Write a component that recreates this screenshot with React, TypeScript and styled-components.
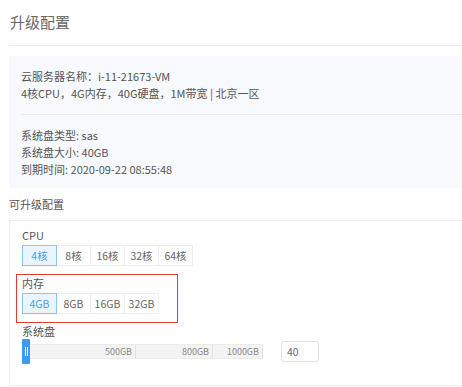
import React, { useState } from 'react';
import styled, { createGlobalStyle } from 'styled-components';

const GlobalStyle = createGlobalStyle`
  html, body {
    margin: 0;
    padding: 0;
    background: #fff;
    overflow: hidden;
  }
  body {
    font-family: "Noto Sans CJK SC", "Noto Sans", sans-serif;
    color: #666;
  }
`;

const Page = styled.div`
  width: 470px;
  padding-left: 9px;
  box-sizing: border-box;
`;

const Title = styled.h1`
  margin: 0;
  height: 46px;
  padding: 11px 0 0 1px;
  box-sizing: border-box;
  font-size: 15px;
  font-weight: 400;
  line-height: 22px;
  color: #666;
  border-bottom: 1px solid #eee;
`;

const InfoBox = styled.div`
  margin-top: 10px;
  background: #f7f9fc;
  padding: 12px 0 10px 12px;
`;

const InfoGroup = styled.div`
  & + & {
    border-top: 1px solid #e6e9ee;
    margin-top: 12px;
    padding-top: 12px;
  }
`;

const InfoLine = styled.div`
  font-size: 11px;
  line-height: 17px;
  color: #555;
`;

const SectionTitle = styled.div`
  font-size: 11px;
  line-height: 16px;
  color: #555;
  margin-top: 8px;
`;

const Panel = styled.div`
  margin-top: 8px;
  border: 1px solid #eee;
  height: 166px;
  box-sizing: border-box;
  padding: 6px 0 0 12px;
`;

const Group = styled.div<{ $highlight?: boolean }>`
  display: flex;
  flex-direction: column;
  align-items: flex-start;
  width: ${({ $highlight }) => ($highlight ? '162px' : 'auto')};
  margin-left: ${({ $highlight }) => ($highlight ? '-6px' : '0')};
  padding: ${({ $highlight }) => ($highlight ? '0 0 8px 5px' : '0')};
  border: ${({ $highlight }) => ($highlight ? '1px solid #e53935' : 'none')};
  box-sizing: border-box;
  margin-bottom: ${({ $highlight }) => ($highlight ? '0' : '8px')};
`;

const Label = styled.div`
  font-size: 11px;
  line-height: 16px;
  color: #555;
  margin-bottom: 2px;
`;

const ButtonRow = styled.div`
  display: flex;
`;

const Option = styled.button<{ $active?: boolean }>`
  width: 35px;
  height: 21px;
  padding: 0;
  margin: 0;
  font-family: inherit;
  font-size: 10.5px;
  line-height: 19px;
  cursor: pointer;
  color: ${({ $active }) => ($active ? '#4a9ff5' : '#666')};
  background: ${({ $active }) => ($active ? '#eaf5ff' : '#fff')};
  border: 1px solid ${({ $active }) => ($active ? '#8cc4fa' : '#eee')};
  margin-right: -1px;
  position: relative;
  z-index: ${({ $active }) => ($active ? 1 : 0)};
`;

const SliderRow = styled.div`
  display: flex;
  align-items: center;
  margin-top: -2px;
`;

const Track = styled.div`
  display: flex;
  align-items: center;
  height: 25px;
`;

const Handle = styled.div`
  width: 8px;
  height: 25px;
  background: #3d9af0;
  border-radius: 1px;
  display: flex;
  align-items: center;
  justify-content: center;
  gap: 1px;
`;

const Grip = styled.span`
  width: 1px;
  height: 9px;
  background: #fff;
`;

const Segment = styled.div<{ $width: number }>`
  width: ${({ $width }) => $width}px;
  height: 15px;
  background: #f3f3f3;
  border-top: 1px solid #ebebeb;
  border-bottom: 1px solid #ebebeb;
  border-right: 1px solid #e2e2e2;
  box-sizing: border-box;
  font-size: 9px;
  line-height: 13px;
  color: #888;
  text-align: right;
  padding-right: 3px;
`;

const SizeInput = styled.input`
  margin-left: 18px;
  width: 38px;
  height: 21px;
  box-sizing: border-box;
  border: 1px solid #e3e3e3;
  border-radius: 2px;
  padding: 0 5px;
  font-family: inherit;
  font-size: 10.5px;
  color: #666;
  outline: none;
`;

const cpus = ['4核', '8核', '16核', '32核', '64核'];
const mems = ['4GB', '8GB', '16GB', '32GB'];
const segments = [
  { label: '500GB', width: 106 },
  { label: '800GB', width: 77 },
  { label: '1000GB', width: 50 },
];

export default function App() {
  const [cpu, setCpu] = useState(0);
  const [mem, setMem] = useState(0);
  const [disk, setDisk] = useState('40');

  return (
    <Page>
      <GlobalStyle />
      <Title>升级配置</Title>
      <InfoBox>
        <InfoGroup>
          <InfoLine>云服务器名称：i-11-21673-VM</InfoLine>
          <InfoLine>4核CPU，4G内存，40G硬盘，1M带宽 | 北京一区</InfoLine>
        </InfoGroup>
        <InfoGroup>
          <InfoLine>系统盘类型: sas</InfoLine>
          <InfoLine>系统盘大小: 40GB</InfoLine>
          <InfoLine>到期时间: 2020-09-22 08:55:48</InfoLine>
        </InfoGroup>
      </InfoBox>
      <SectionTitle>可升级配置</SectionTitle>
      <Panel>
        <Group>
          <Label>CPU</Label>
          <ButtonRow>
            {cpus.map((c, i) => (
              <Option key={c} $active={i === cpu} onClick={() => setCpu(i)}>
                {c}
              </Option>
            ))}
          </ButtonRow>
        </Group>
        <Group $highlight>
          <Label>内存</Label>
          <ButtonRow>
            {mems.map((m, i) => (
              <Option key={m} $active={i === mem} onClick={() => setMem(i)}>
                {m}
              </Option>
            ))}
          </ButtonRow>
        </Group>
        <Group>
          <Label>系统盘</Label>
          <SliderRow>
            <Track>
              <Handle>
                <Grip />
                <Grip />
              </Handle>
              {segments.map((s) => (
                <Segment key={s.label} $width={s.width}>
                  {s.label}
                </Segment>
              ))}
            </Track>
            <SizeInput value={disk} onChange={(e) => setDisk(e.target.value)} />
          </SliderRow>
        </Group>
      </Panel>
    </Page>
  );
}
